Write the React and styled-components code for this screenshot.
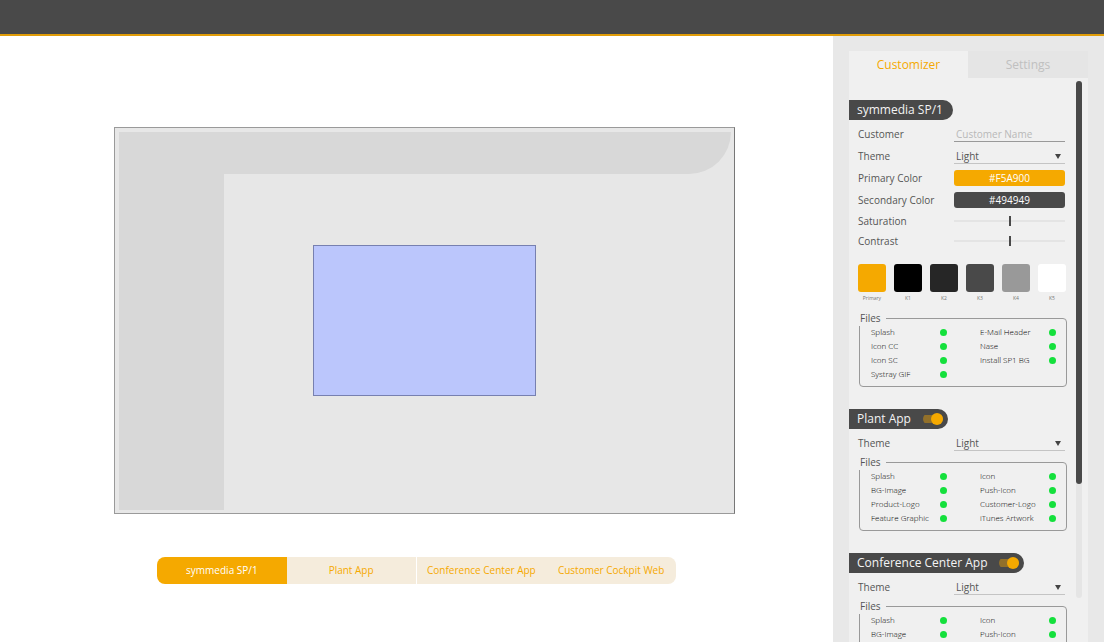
import React, { useState } from "react";
import styled, { createGlobalStyle } from "styled-components";

const c = {
  primary: "#f5a900",
  secondary: "#494949",
  panel: "#f0f0f0",
  chrome: "#e8e8e8",
  ok: "#14e03c",
};

const GlobalStyle = createGlobalStyle`
  *, *::before, *::after { box-sizing: border-box; }
  body {
    margin: 0;
    background: #fff;
    color: #555;
    font-family: "Open Sans", "Noto Sans", sans-serif;
    font-size: 10px;
  }
  button, input, select { font: inherit; }
`;

const Page = styled.div`
  display: flex;
  flex-direction: column;
  height: 100vh;
  overflow: hidden;
`;

const TopBar = styled.header`
  flex: none;
  height: 36px;
  background: ${c.secondary};
  border-bottom: 2px solid #e09c08;
`;

const Workspace = styled.div`
  display: flex;
  flex: 1;
  min-height: 0;
`;

const Stage = styled.main`
  flex: 1;
  min-width: 0;
  padding-top: 91px;
`;

const Preview = styled.section`
  display: grid;
  grid-template-columns: 105px 1fr;
  grid-template-rows: 42px 1fr;
  margin: 0 98px 0 114px;
  aspect-ratio: 621 / 387;
  padding: 4px 3px 3px 4px;
  background: #e7e7e7;
  border: 1px solid #9a9a9a;
  border-right-color: #777;
`;

const PreviewHeader = styled.div`
  grid-column: 1 / -1;
  background: #d8d8d8;
  border-bottom-right-radius: 42px;
`;

const PreviewNav = styled.div`
  background: #d8d8d8;
`;

const PreviewDialog = styled.div`
  width: 44%;
  height: 45%;
  margin: 71px 0 0 89px;
  background: #bbc6fc;
  border: 1px solid #7780b0;
`;

const AppTabs = styled.nav`
  display: grid;
  grid-template-columns: repeat(4, 1fr);
  margin: 43px 157px 0;
  border-radius: 8px;
  overflow: hidden;
`;

const AppTab = styled.button`
  height: 27px;
  padding: 0 0 1px;
  border: 0;
  border-right: ${(p) => (p.$divider ? "1px solid #fff" : "0")};
  background: ${(p) => (p.$active ? c.primary : "#f5ecdc")};
  color: ${(p) => (p.$active ? "#fff" : c.primary)};
  white-space: nowrap;
`;

const Sidebar = styled.aside`
  display: flex;
  flex-direction: column;
  flex: none;
  width: 271px;
  padding: 15px 16px 0;
  background: ${c.chrome};
`;

const PanelTabs = styled.div`
  display: grid;
  grid-template-columns: 119px 1fr;
  flex: none;
`;

const PanelTab = styled.button`
  height: 27px;
  padding: 0 0 1px;
  border: 0;
  font-size: 12px;
  background: ${(p) => (p.$active ? c.panel : "#e5e5e5")};
  color: ${(p) => (p.$active ? c.primary : "#c0c0c0")};
`;

const Panel = styled.div`
  display: flex;
  flex: 1;
  min-height: 0;
  padding-right: 6px;
  background: ${c.panel};
`;

const PanelContent = styled.div`
  flex: 1;
  min-width: 0;
  padding-top: 22px;
  overflow: hidden;
`;

const ScrollTrack = styled.div`
  flex: none;
  width: 6px;
  margin: 3px 0 44px;
  border-radius: 3px;
  background: #e5e5e5;
`;

const ScrollThumb = styled.div`
  height: 78%;
  border-radius: 3px;
  background: ${c.secondary};
`;

const Section = styled.section`
  margin-bottom: 22px;
`;

const SectionTitle = styled.div`
  display: flex;
  align-items: center;
  gap: 12px;
  width: fit-content;
  height: 20px;
  margin-bottom: 3px;
  padding: 0 ${(p) => (p.$toggle ? 5 : 10)}px 0 8px;
  border-radius: 0 10px 10px 0;
  background: ${c.secondary};
`;

const Heading = styled.h2`
  margin: 0;
  color: #f4f4f4;
  font-size: 12px;
  font-weight: 400;
  line-height: 20px;
  white-space: nowrap;
`;

const Toggle = styled.input`
  appearance: none;
  display: flex;
  align-items: center;
  width: 20px;
  height: 12px;
  margin: 0;
  background: linear-gradient(#92702a, #92702a) center / 20px 8px no-repeat;
  border-radius: 6px;
  &::before {
    content: "";
    width: 12px;
    height: 12px;
    border-radius: 50%;
    background: #999;
  }
  &:checked::before {
    margin-left: auto;
    background: ${c.primary};
  }
`;

const Row = styled.div`
  display: grid;
  grid-template-columns: 96px 111px;
  align-items: center;
  height: ${(p) => (p.$compact ? 20 : 22)}px;
  padding-left: 9px;
`;

const Label = styled.label`
  line-height: 16px;
`;

const TextField = styled.input`
  width: 100%;
  height: 16px;
  padding: 0 2px;
  border: 0;
  border-bottom: 1px solid #999;
  background: transparent;
  color: #555;
  outline: 0;
  &::placeholder { color: #b8b8b8; opacity: 1; }
`;

const SelectBox = styled.div`
  display: grid;
  grid-template-columns: 1fr 6px;
  align-items: center;
  height: 16px;
  padding-right: 4px;
  border-bottom: 1px solid #c4c4c4;
  svg { width: 6px; height: 6px; grid-area: 1 / 2; pointer-events: none; }
`;

const Select = styled.select`
  appearance: none;
  grid-area: 1 / 1 / 2 / 3;
  width: 100%;
  height: 15px;
  padding: 0 2px;
  border: 0;
  background: transparent;
  color: #555;
  outline: 0;
`;

const ColorButton = styled.button`
  height: 16px;
  padding: 0;
  border: 0;
  border-radius: 3px;
  background: ${(p) => p.$color};
  color: #fff;
  line-height: 16px;
`;

const Slider = styled.input`
  appearance: none;
  width: 100%;
  height: 10px;
  margin: 0;
  background: linear-gradient(#e4e4e4, #e4e4e4) center / 100% 2px no-repeat;
  &::-webkit-slider-thumb {
    appearance: none;
    width: 2px;
    height: 10px;
    background: ${c.secondary};
  }
`;

const Swatches = styled.div`
  display: flex;
  justify-content: space-between;
  margin: 13px 10px 6px 9px;
`;

const Swatch = styled.figure`
  width: 28px;
  margin: 0;
`;

const SwatchColor = styled.div`
  height: 28px;
  border-radius: 3px;
  background: ${(p) => p.$color};
`;

const SwatchName = styled.figcaption`
  color: #777;
  font-size: 5px;
  line-height: 12px;
  text-align: center;
`;

const FileBox = styled.fieldset`
  min-width: 0;
  margin: 0 9px 0 10px;
  padding: 0 0 5px;
  border: 1px solid #999;
  border-radius: 4px;
`;

const FileLegend = styled.legend`
  width: 27px;
  height: 16px;
  margin-left: -1px;
  padding: 0 0 0 1px;
  background: ${c.panel};
  line-height: 16px;
`;

const FileGrid = styled.ul`
  display: grid;
  grid-template-columns: 76px 76px;
  grid-auto-rows: 14px;
  column-gap: 33px;
  margin: -1px 0 0;
  padding: 0 0 0 11px;
  list-style: none;
`;

const FileItem = styled.li`
  display: flex;
  align-items: center;
  justify-content: space-between;
  color: #000;
  font-size: 8px;
  font-weight: 300;
  line-height: 14px;
  white-space: nowrap;
`;

const StatusDot = styled.span`
  width: 7px;
  height: 7px;
  border-radius: 50%;
  background: ${c.ok};
`;

const swatches = [
  ["Primary", "#f5a900"],
  ["K1", "#000000"],
  ["K2", "#262626"],
  ["K3", "#494949"],
  ["K4", "#999999"],
  ["K5", "#ffffff"],
];

const spFiles = ["Splash", "E-Mail Header", "Icon CC", "Nase", "Icon SC", "Install SP1 BG", "Systray GIF"];
const plantFiles = [
  "Splash", "Icon", "BG-Image", "Push-Icon",
  "Product-Logo", "Customer-Logo", "Feature Graphic", "iTunes Artwork",
];
const conferenceFiles = ["Splash", "Icon", "BG-Image", "Push-Icon"];
const apps = ["symmedia SP/1", "Plant App", "Conference Center App", "Customer Cockpit Web"];

function ThemeRow({ id }) {
  return (
    <Row>
      <Label htmlFor={id}>Theme</Label>
      <SelectBox>
        <Select id={id} defaultValue="Light">
          <option>Light</option>
          <option>Dark</option>
        </Select>
        <svg viewBox="0 0 6 6" aria-hidden="true">
          <path d="M0 1h6L3 6z" fill="#444" />
        </svg>
      </SelectBox>
    </Row>
  );
}

function Files({ names }) {
  return (
    <FileBox>
      <FileLegend>Files</FileLegend>
      <FileGrid>
        {names.map((name) => (
          <FileItem key={name}>
            {name}
            <StatusDot />
          </FileItem>
        ))}
      </FileGrid>
    </FileBox>
  );
}

function AppSection({ id, title, files }) {
  return (
    <Section>
      <SectionTitle $toggle>
        <Heading>{title}</Heading>
        <Toggle type="checkbox" defaultChecked aria-label={title} />
      </SectionTitle>
      <ThemeRow id={`${id}-theme`} />
      <Files names={files} />
    </Section>
  );
}

export default function App() {
  const [app, setApp] = useState(0);
  return (
    <Page>
      <GlobalStyle />
      <TopBar />
      <Workspace>
        <Stage>
          <Preview>
            <PreviewHeader />
            <PreviewNav />
            <PreviewDialog />
          </Preview>
          <AppTabs>
            {apps.map((name, i) => (
              <AppTab key={name} $active={app === i} $divider={i === 1} onClick={() => setApp(i)}>
                {name}
              </AppTab>
            ))}
          </AppTabs>
        </Stage>
        <Sidebar>
          <PanelTabs>
            <PanelTab $active>Customizer</PanelTab>
            <PanelTab>Settings</PanelTab>
          </PanelTabs>
          <Panel>
            <PanelContent>
              <Section>
                <SectionTitle>
                  <Heading>symmedia SP/1</Heading>
                </SectionTitle>
                <Row>
                  <Label htmlFor="customer">Customer</Label>
                  <TextField id="customer" placeholder="Customer Name" />
                </Row>
                <ThemeRow id="sp-theme" />
                <Row>
                  <Label htmlFor="primary">Primary Color</Label>
                  <ColorButton id="primary" $color={c.primary}>#F5A900</ColorButton>
                </Row>
                <Row>
                  <Label htmlFor="secondary">Secondary Color</Label>
                  <ColorButton id="secondary" $color={c.secondary}>#494949</ColorButton>
                </Row>
                <Row $compact>
                  <Label htmlFor="saturation">Saturation</Label>
                  <Slider id="saturation" type="range" defaultValue="50" />
                </Row>
                <Row $compact>
                  <Label htmlFor="contrast">Contrast</Label>
                  <Slider id="contrast" type="range" defaultValue="50" />
                </Row>
                <Swatches>
                  {swatches.map(([name, color]) => (
                    <Swatch key={name}>
                      <SwatchColor $color={color} />
                      <SwatchName>{name}</SwatchName>
                    </Swatch>
                  ))}
                </Swatches>
                <Files names={spFiles} />
              </Section>
              <AppSection id="plant" title="Plant App" files={plantFiles} />
              <AppSection id="conference" title="Conference Center App" files={conferenceFiles} />
            </PanelContent>
            <ScrollTrack>
              <ScrollThumb />
            </ScrollTrack>
          </Panel>
        </Sidebar>
      </Workspace>
    </Page>
  );
}
